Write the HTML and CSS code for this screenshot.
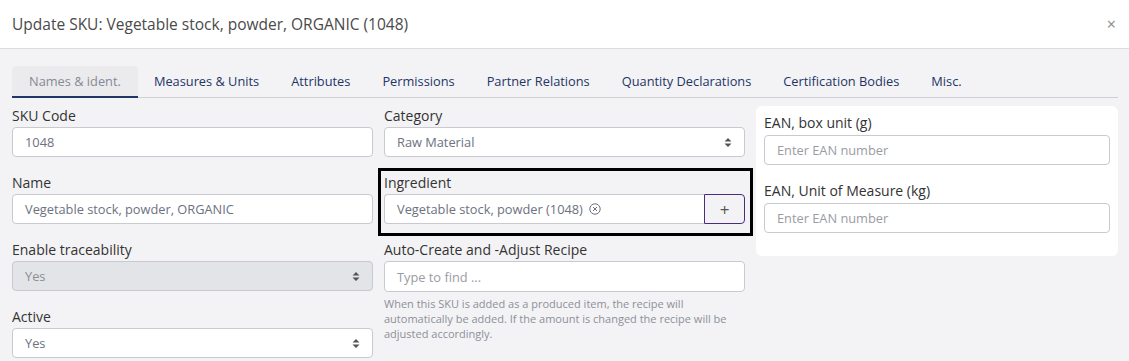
FILE: index.html
```html
<!DOCTYPE html>
<html lang="en">
<head>
  <meta charset="UTF-8">
  <title>Update SKU</title>
  <link rel="stylesheet" href="styles.css">
</head>
<body>
  <div class="modal-header">
    <h1>Update SKU: Vegetable stock, powder, ORGANIC (1048)</h1>
    <span class="close">&times;</span>
  </div>

  <div class="modal-body">
    <ul class="tabs">
      <li class="active">Names &amp; ident.</li>
      <li>Measures &amp; Units</li>
      <li>Attributes</li>
      <li>Permissions</li>
      <li>Partner Relations</li>
      <li>Quantity Declarations</li>
      <li>Certification Bodies</li>
      <li>Misc.</li>
    </ul>

    <div class="form-grid">
      <div class="col">
        <div class="field">
          <label>SKU Code</label>
          <div class="input">1048</div>
        </div>
        <div class="field">
          <label>Name</label>
          <div class="input">Vegetable stock, powder, ORGANIC</div>
        </div>
        <div class="field">
          <label>Enable traceability</label>
          <div class="input select disabled">Yes
            <svg class="caret" width="8" height="11" viewBox="0 0 8 11"><path d="M4 1 L7.5 4.5 H0.5 Z M4 10 L7.5 6.5 H0.5 Z" fill="#555"/></svg>
          </div>
        </div>
        <div class="field">
          <label>Active</label>
          <div class="input select">Yes
            <svg class="caret" width="8" height="11" viewBox="0 0 8 11"><path d="M4 1 L7.5 4.5 H0.5 Z M4 10 L7.5 6.5 H0.5 Z" fill="#555"/></svg>
          </div>
        </div>
      </div>

      <div class="col">
        <div class="field">
          <label>Category</label>
          <div class="input select">Raw Material
            <svg class="caret" width="8" height="11" viewBox="0 0 8 11"><path d="M4 1 L7.5 4.5 H0.5 Z M4 10 L7.5 6.5 H0.5 Z" fill="#555"/></svg>
          </div>
        </div>
        <div class="field highlight">
          <label>Ingredient</label>
          <div class="input-group">
            <div class="input">Vegetable stock, powder (1048)
              <svg class="clear" width="12" height="12" viewBox="0 0 12 12"><circle cx="6" cy="6" r="5.2" fill="none" stroke="#6c7280" stroke-width="1"/><path d="M4 4 L8 8 M8 4 L4 8" stroke="#6c7280" stroke-width="1"/></svg>
            </div>
            <button class="add-btn">+</button>
          </div>
        </div>
        <div class="field">
          <label>Auto-Create and -Adjust Recipe</label>
          <div class="input tall placeholder">Type to find ...</div>
          <p class="help">When this SKU is added as a produced item, the recipe will automatically be added. If the amount is changed the recipe will be adjusted accordingly.</p>
        </div>
      </div>

      <div class="col">
        <div class="card">
          <div class="field">
            <label>EAN, box unit (g)</label>
            <div class="input placeholder">Enter EAN number</div>
          </div>
          <div class="field">
            <label>EAN, Unit of Measure (kg)</label>
            <div class="input placeholder">Enter EAN number</div>
          </div>
        </div>
      </div>
    </div>
  </div>
</body>
</html>
```

FILE: styles.css
```css
body {
  margin: 0;
  font-family: 'Open Sans', sans-serif;
  background: #f3f3f5;
  color: #333;
  overflow: hidden;
}

.modal-header {
  height: 48px;
  background: #fff;
  border-bottom: 1px solid #dcdcde;
  display: flex;
  align-items: center;
  justify-content: space-between;
  padding: 0 12px;
}

.modal-header h1 {
  margin: 0;
  font-size: 15.5px;
  font-weight: 400;
  color: #4a4a4a;
}

.close {
  color: #888;
  font-size: 16px;
  margin-right: 1px;
}

.modal-body {
  padding: 17px 11px 0 12px;
}

.tabs {
  list-style: none;
  margin: 0;
  padding: 0;
  display: flex;
  border-bottom: 1px solid #cfd0d4;
  height: 31px;
}

.tabs li {
  font-size: 12.8px;
  color: #1e3566;
  padding: 0 16px;
  line-height: 31px;
}

.tabs li.active {
  color: #858a94;
  background: #ebebed;
  border-radius: 4px 4px 0 0;
  border-bottom: 2px solid #1e3566;
  padding: 0 17px;
  line-height: 30px;
  height: 30px;
}

.form-grid {
  display: grid;
  grid-template-columns: 361px 361px 362px;
  column-gap: 11px;
  margin-top: 8px;
}

.field {
  margin-bottom: 16px;
}

.field label {
  display: block;
  font-size: 14px;
  line-height: 20px;
  margin-bottom: 1px;
  color: #333;
}

.input {
  height: 28px;
  background: #fff;
  border: 1px solid #c8cad0;
  border-radius: 4px;
  padding: 0 12px;
  font-size: 12.8px;
  color: #6c7280;
  display: flex;
  align-items: center;
  position: relative;
}

.input.tall {
  height: 29px;
}

.input.placeholder {
  color: #999ca3;
}

.input.disabled {
  background: #e3e4e7;
  color: #8a8e96;
}

.select .caret {
  position: absolute;
  right: 12px;
  top: 9px;
}

.clear {
  margin-left: 6px;
}

.highlight {
  border: 3px solid #000;
  padding: 2px 5px 9px 3px;
  margin: -5px -8px 4px -6px;
}

.input-group {
  display: flex;
}

.input-group .input {
  flex: 1;
  border-radius: 4px 0 0 4px;
  border-right: none;
}

.add-btn {
  width: 41px;
  height: 30px;
  background: transparent;
  border: 1px solid #4b2d7f;
  border-radius: 0 4px 4px 0;
  font-family: 'Open Sans', sans-serif;
  font-size: 17px;
  color: #555;
  padding: 0;
}

.help {
  margin: 4px 0 0;
  font-size: 11px;
  line-height: 15px;
  color: #8d9098;
}

.card {
  background: #fff;
  border-radius: 6px;
  padding: 7px 8px 7px 8px;
}

.card .field label {
  margin-bottom: 2px;
}
```
